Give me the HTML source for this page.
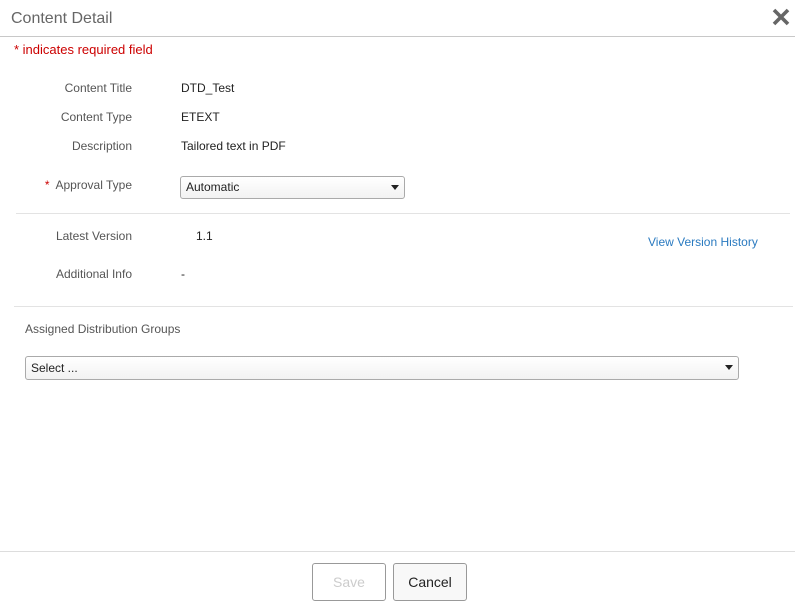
<!DOCTYPE html>
<html><head><style>
body{margin:0;width:795px;height:615px;background:#fff;font-family:"Liberation Sans",sans-serif;position:relative;overflow:hidden}
.a{position:absolute;white-space:nowrap}
.lbl{font-size:12px;color:#555;text-align:right;width:120px}
.val{font-size:12px;color:#222}
.hr{position:absolute;height:1px;background:#e3e3e3}
.sel{position:absolute;border:1px solid #aaa;border-radius:3px;background:linear-gradient(#fff,#f2f2f2);font-size:12px;color:#222;box-sizing:border-box;padding-left:5px}
.sel:after{content:"";position:absolute;right:5px;top:8px;border-left:4px solid transparent;border-right:4px solid transparent;border-top:5px solid #222}
.btn{position:absolute;top:563px;width:74px;height:38px;border:1px solid #999;border-radius:3px;box-sizing:border-box;font-size:14px;text-align:center;line-height:36px}
</style></head><body>
<div class="a" style="left:11px;top:10px;font-size:16px;color:#666">Content Detail</div>
<svg class="a" style="left:772px;top:8px" width="18" height="18" viewBox="0 0 18 18"><path d="M2 2L16 16M16 2L2 16" stroke="#666" stroke-width="3.6"/></svg>
<div class="hr" style="left:0;top:36px;width:795px;background:#c8c8c8"></div>
<div class="a" style="left:14px;top:42px;font-size:13px;color:#c00">* indicates required field</div>
<div class="a lbl" style="left:12px;top:81px">Content Title</div><div class="a val" style="left:181px;top:81px">DTD_Test</div>
<div class="a lbl" style="left:12px;top:110px">Content Type</div><div class="a val" style="left:181px;top:110px">ETEXT</div>
<div class="a lbl" style="left:12px;top:139px">Description</div><div class="a val" style="left:181px;top:139px">Tailored text in PDF</div>
<div class="a lbl" style="left:12px;top:178px"><span style="color:#c00">*</span>&nbsp; Approval Type</div>
<div class="sel" style="left:180px;top:176px;width:225px;height:23px;line-height:21px">Automatic</div>
<div class="hr" style="left:16px;top:213px;width:774px"></div>
<div class="a lbl" style="left:12px;top:229px">Latest Version</div><div class="a val" style="left:196px;top:229px">1.1</div>
<div class="a" style="left:648px;top:235px;font-size:12px;color:#2a7ac0">View Version History</div>
<div class="a lbl" style="left:12px;top:267px">Additional Info</div><div class="a val" style="left:181px;top:267px">-</div>
<div class="hr" style="left:14px;top:306px;width:779px"></div>
<div class="a" style="left:25px;top:322px;font-size:12px;color:#555">Assigned Distribution Groups</div>
<div class="sel" style="left:25px;top:356px;width:714px;height:24px;line-height:22px">Select ...</div>
<div class="hr" style="left:0;top:551px;width:795px;background:#ddd"></div>
<div class="btn" style="left:312px;color:#ccc;background:#fff">Save</div>
<div class="btn" style="left:393px;color:#222;background:#f8f8f8">Cancel</div>
</body></html>
